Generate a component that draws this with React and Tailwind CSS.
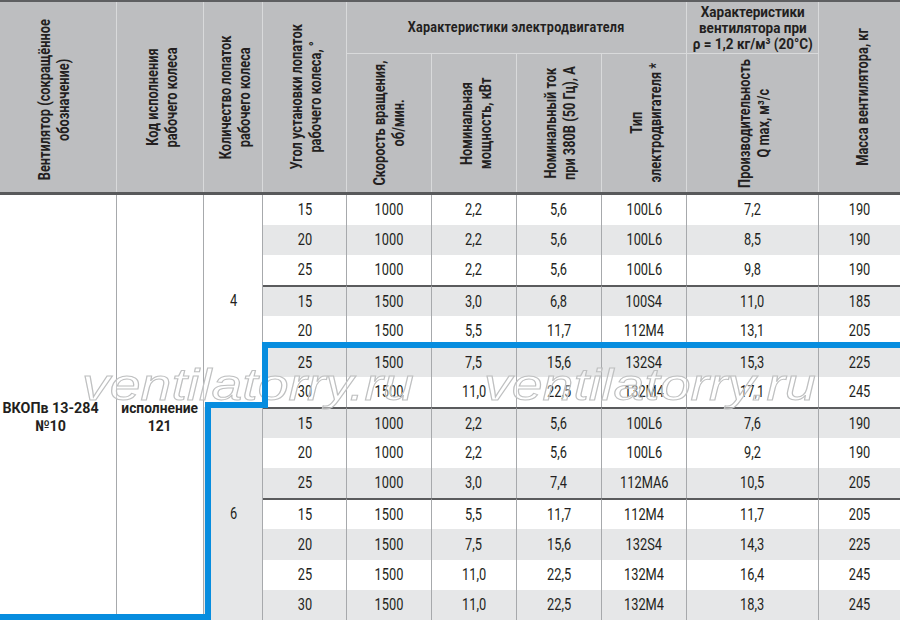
const rows = [
  ["15", "1000", "2,2", "5,6", "100L6", "7,2", "190"],
  ["20", "1000", "2,2", "5,6", "100L6", "8,5", "190"],
  ["25", "1000", "2,2", "5,6", "100L6", "9,8", "190"],
  ["15", "1500", "3,0", "6,8", "100S4", "11,0", "185"],
  ["20", "1500", "5,5", "11,7", "112M4", "13,1", "205"],
  ["25", "1500", "7,5", "15,6", "132S4", "15,3", "225"],
  ["30", "1500", "11,0", "22,5", "132M4", "17,1", "245"],
  ["15", "1000", "2,2", "5,6", "100L6", "7,6", "190"],
  ["20", "1000", "2,2", "5,6", "100L6", "9,2", "190"],
  ["25", "1000", "3,0", "7,4", "112MA6", "10,5", "205"],
  ["15", "1500", "5,5", "11,7", "112M4", "11,7", "205"],
  ["20", "1500", "7,5", "15,6", "132S4", "14,3", "225"],
  ["25", "1500", "11,0", "22,5", "132M4", "16,4", "245"],
  ["30", "1500", "11,0", "22,5", "132M4", "18,3", "245"],
];

// rows that open a new group get the dark rule on top
const groupStart = [3, 5, 7, 10];

function VHead({ lines, className = "" }) {
  return (
    <div className={`flex items-center justify-center overflow-hidden ${className}`}>
      <div className="shrink-0 [writing-mode:vertical-rl] rotate-180 scale-y-[0.8] whitespace-nowrap text-center text-[16px] font-bold leading-[19px]">
        {lines.map((l, i) => (
          <span key={i}>
            {i > 0 && <br />}
            {l}
          </span>
        ))}
      </div>
    </div>
  );
}

function Watermark({ className }) {
  return (
    <span
      className={`absolute origin-left scale-x-[1.26] whitespace-nowrap [font-family:'Liberation_Sans',Arial,sans-serif] text-[44px] italic leading-none text-white/40 [-webkit-text-stroke:1px_#bfc0c1] ${className}`}
    >
      ventilatorry.ru
    </span>
  );
}

export default function App() {
  return (
    <div className="h-[620px] w-[900px] overflow-hidden bg-white [font-family:Roboto,sans-serif] text-[#231f20]">
      {/* Header */}
      <div className="grid grid-cols-[117px_87px_59px_84px_85px_85px_85px_85px_132px_81px] grid-rows-[52px_138px] border-t-2 border-b-[3px] border-t-[#5e5f61] border-b-[#58595b] bg-[#bdbec0]">
        <VHead
          className="col-start-1 row-start-1 row-span-2 border-r border-[#d9dadb] pr-[9px] pt-[6px]"
          lines={["Вентилятор (сокращённое", "обозначение)"]}
        />
        <VHead
          className="col-start-2 row-start-1 row-span-2 border-r border-[#d9dadb] pl-[4px]"
          lines={["Код исполнения", "рабочего колеса"]}
        />
        <VHead
          className="col-start-3 row-start-1 row-span-2 border-r border-[#d9dadb] pl-[4px]"
          lines={["Количество лопаток", "рабочего колеса"]}
        />
        <VHead
          className="col-start-4 row-start-1 row-span-2 border-r border-[#d9dadb] pl-[2px]"
          lines={["Угол установки лопаток", "рабочего колеса, °"]}
        />
        <div className="col-start-5 col-span-4 row-start-1 flex items-center justify-center border-r border-b border-[#d9dadb]">
          <span className="inline-block scale-x-[0.84] whitespace-nowrap text-[15px] font-bold tracking-[0.3px]">
            Характеристики электродвигателя
          </span>
        </div>
        <div className="col-start-9 row-start-1 flex flex-col items-center justify-center border-r border-b border-[#d9dadb] text-[15px] font-bold leading-[16px]">
          <span className="inline-block scale-x-[0.9] whitespace-nowrap">Характеристики</span>
          <span className="inline-block scale-x-[0.9] whitespace-nowrap">вентилятора при</span>
          <span className="inline-block scale-x-[0.9] whitespace-nowrap">
            ρ = 1,2 кг/м³ (20°C)
          </span>
        </div>
        <VHead
          className="col-start-10 row-start-1 row-span-2 pl-[5px]"
          lines={["Масса вентилятора, кг"]}
        />
        <VHead
          className="col-start-5 row-start-2 border-r border-[#d9dadb]"
          lines={["Скорость вращения,", "об/мин."]}
        />
        <VHead
          className="col-start-6 row-start-2 border-r border-[#d9dadb] pl-[4px]"
          lines={["Номинальная", "мощность, кВт"]}
        />
        <VHead
          className="col-start-7 row-start-2 border-r border-[#d9dadb] pl-[2px]"
          lines={["Номинальный ток", "при 380В (50 Гц), А"]}
        />
        <VHead
          className="col-start-8 row-start-2 border-r border-[#d9dadb] pl-[4px]"
          lines={["Тип", "электродвигателя *"]}
        />
        <VHead
          className="col-start-9 row-start-2 border-r border-[#d9dadb] pl-[3px]"
          lines={["Производительность", "Q max, м³/с"]}
        />
      </div>

      {/* Body */}
      <div className="relative">
        <div className="grid grid-cols-[117px_87px_59px_84px_85px_85px_85px_85px_132px_81px] grid-rows-[30px_30px_30px_31px_30px_31px_30px_31px_30px_30px_31px_31px_30px_30px]">
          <div className="col-start-1 row-start-1 row-span-14 flex items-center justify-center border-r border-[#a7a9ac] pr-[15px] pt-[18px] text-center text-[15px] font-bold leading-[18px]">
            <div>
              <div className="scale-x-[0.95] whitespace-nowrap">ВКОПв 13-284</div>
              <div className="scale-x-[0.95] whitespace-nowrap">№10</div>
            </div>
          </div>
          <div className="col-start-2 row-start-1 row-span-14 flex items-center justify-center border-r border-[#a7a9ac] pt-[18px] text-center text-[15px] font-bold leading-[18px]">
            <div>
              <div className="scale-x-[0.92] whitespace-nowrap">исполнение</div>
              <div className="scale-x-[0.92] whitespace-nowrap">121</div>
            </div>
          </div>
          <div className="col-start-3 row-start-1 row-span-7 flex items-center justify-center border-r border-[#a7a9ac] text-[16px]">
            <span className="inline-block scale-x-[0.8]">4</span>
          </div>
          <div className="col-start-3 row-start-8 row-span-7 flex items-center justify-center border-r border-[#a7a9ac] bg-[#e6e7e8] text-[16px]">
            <span className="inline-block scale-x-[0.8]">6</span>
          </div>

          {rows.map((row, r) =>
            row.map((val, c) => (
              <div
                key={`${r}-${c}`}
                className={`flex items-center justify-center text-[16px] ${
                  r % 2 === 1 ? "bg-[#e6e7e8]" : "bg-white"
                } ${c < 6 ? "border-r border-r-[#a7a9ac]" : ""} ${
                  groupStart.includes(r) ? "border-t-2 border-t-[#5a5b5d]" : ""
                }`}
              >
                <span className="inline-block scale-x-[0.8] whitespace-nowrap">{val}</span>
              </div>
            ))
          )}
        </div>

        <Watermark className="left-[82px] top-[168px]" />
        <Watermark className="left-[484px] top-[168px]" />

        <svg className="pointer-events-none absolute inset-0 h-full w-full overflow-visible">
          <polyline
            points="910,150 265,150 265,210 208,210 208,421.5 -10,421.5"
            fill="none"
            stroke="#078ddf"
            strokeWidth="6"
            strokeLinejoin="miter"
            shapeRendering="crispEdges"
          />
        </svg>
      </div>
    </div>
  );
}
